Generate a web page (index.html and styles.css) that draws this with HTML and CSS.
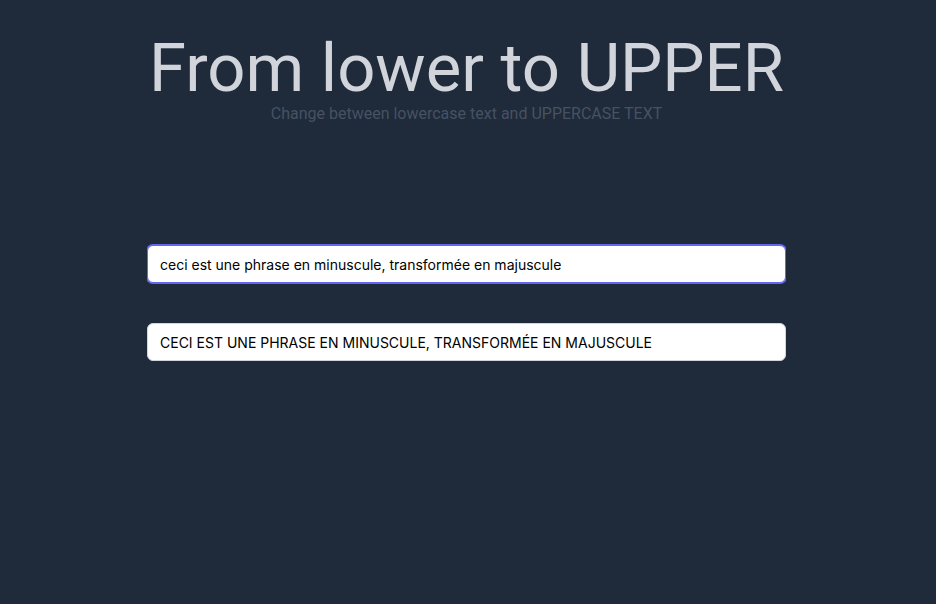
FILE: index.html
```html
<!DOCTYPE html>
<html lang="en">
<head>
<meta charset="utf-8">
<meta name="viewport" content="width=device-width, initial-scale=1">
<title>From lower to UPPER</title>
<link rel="stylesheet" href="styles.css">
</head>
<body>
<main class="page">
  <div class="converter">
    <header class="intro">
      <h1 class="title">From lower to UPPER</h1>
      <p class="subtitle">Change between lowercase text and UPPERCASE TEXT</p>
    </header>
    <form class="fields">
      <input class="field field-active" type="text" aria-label="Lowercase text" value="ceci est une phrase en minuscule, transformée en majuscule">
      <input class="field" type="text" aria-label="Uppercase text" value="CECI EST UNE PHRASE EN MINUSCULE, TRANSFORMÉE EN MAJUSCULE">
    </form>
  </div>
</main>
</body>
</html>
```
FILE: styles.css
```css
* {
  box-sizing: border-box;
}

body {
  margin: 0;
  min-height: 100vh;
  background: #1f2a3a;
  font-family: Roboto, "Liberation Sans", sans-serif;
}

.page {
  display: flex;
  justify-content: center;
  padding: 32px 19px 32px 16px;
}

.converter {
  display: flex;
  flex-direction: column;
  gap: 120px;
  width: 100%;
  max-width: 639px;
}

.title {
  margin: 0;
  color: #d1d5db;
  font-size: 67px;
  font-weight: 400;
  line-height: 72px;
  text-align: center;
}

.subtitle {
  margin: 0;
  color: #465263;
  font-size: 16px;
  line-height: 20px;
  text-align: center;
}

.fields {
  display: flex;
  flex-direction: column;
  gap: 40px;
  padding: 1px 0;
  overflow: hidden;
}

.field {
  width: 100%;
  height: 38px;
  padding: 8px 12px;
  border: 1px solid #d1d5db;
  border-radius: 6px;
  background: #fff;
  color: #000;
  font: 14px/20px Inter, "Liberation Sans", sans-serif;
}

.field-active {
  border-color: #6366f1;
  outline: none;
  box-shadow: 0 0 0 1px #6366f1;
}
```
